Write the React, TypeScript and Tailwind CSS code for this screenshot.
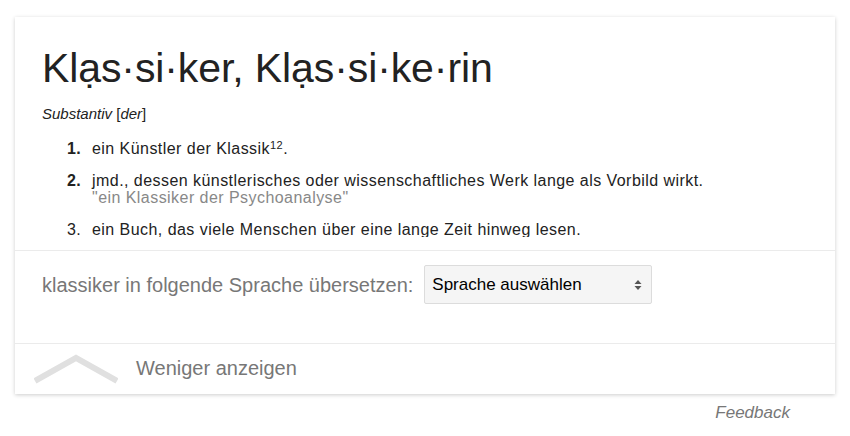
import React from 'react';

const defs = [
  { n: '1', bold: true, text: 'ein Künstler der Klassik', sup: '12', tail: '.' },
  {
    n: '2',
    bold: true,
    text: 'jmd., dessen künstlerisches oder wissenschaftliches Werk lange als Vorbild wirkt.',
    example: '"ein Klassiker der Psychoanalyse"',
  },
  { n: '3', bold: false, text: 'ein Buch, das viele Menschen über eine lange Zeit hinweg lesen.' },
];

function Chevron() {
  return (
    <svg width="84" height="30" viewBox="0 0 84 30" className="shrink-0">
      <path d="M1 27 L42 4 L83 27" fill="none" stroke="#e0e0e0" strokeWidth="6" />
    </svg>
  );
}

function SelectArrows() {
  return (
    <svg width="8" height="14" viewBox="0 0 8 14">
      <path d="M4 2 L7.5 6 L0.5 6 Z" fill="#555" />
      <path d="M4 12 L7.5 8 L0.5 8 Z" fill="#555" />
    </svg>
  );
}

export default function App() {
  return (
    <div className="w-[850px] h-[436px] bg-white font-['Liberation_Sans',Arial,sans-serif] text-[#222]">
      <div className="pt-[17px] pl-[15px]">
        <div className="w-[820px] bg-white shadow-[0_1px_4px_rgba(0,0,0,0.2)]">
          <div className="h-[233px]">
            <div className="h-[220px] overflow-hidden pl-[27px] pt-[28px]">
              <h1 className="text-[41px] leading-[46px] tracking-[-0.1px]">Klạs·si·ker, Klạs·si·ke·rin</h1>
              <div className="mt-[14px] text-[15px] leading-[18px]">
                <i>Substantiv</i> [<i>der</i>]
              </div>
              <ol className="mt-[17px] text-[16px] leading-[17px] tracking-[0.45px]">
                {defs.map((d) => (
                  <li key={d.n} className="flex mb-[15px]">
                    <span className={`w-[25px] pl-[25px] box-content shrink-0 ${d.bold ? 'font-bold' : ''}`}>{d.n}.</span>
                    <div>
                      <div>
                        {d.text}
                        {d.sup && <sup className="text-[11px]">{d.sup}</sup>}
                        {d.tail}
                      </div>
                      {d.example && <div className="text-[#888]">{d.example}</div>}
                    </div>
                  </li>
                ))}
              </ol>
            </div>
          </div>

          {/* translate */}
          <div className="h-[93px] border-t border-[#ebebeb] pl-[27px] pt-[14px]">
            <div className="flex items-center gap-[11px]">
              <span className="text-[20px] text-[#777]">klassiker in folgende Sprache übersetzen:</span>
              <div className="w-[228px] h-[39px] bg-[#f5f5f5] border border-[#dcdcdc] rounded-[2px] flex items-center justify-between pl-[7px] pr-[9px] text-[17px] text-black">
                <span>Sprache auswählen</span>
                <SelectArrows />
              </div>
            </div>
          </div>

          {/* less */}
          <div className="h-[51px] border-t border-[#ebebeb] flex items-center pl-[19px]">
            <Chevron />
            <span className="ml-[18px] text-[20px] text-[#777] -mt-[3px]">Weniger anzeigen</span>
          </div>
        </div>
      </div>
      <div className="w-[790px] text-right mt-[6px] text-[17px] italic text-[#777]">Feedback</div>
    </div>
  );
}
